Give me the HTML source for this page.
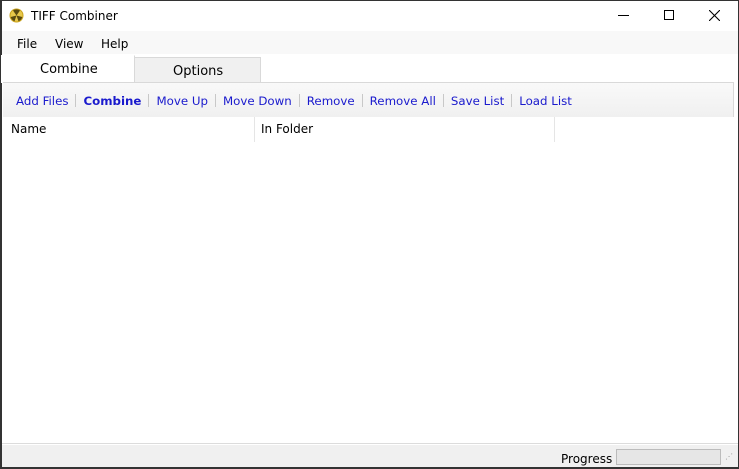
<!DOCTYPE html>
<html><head><meta charset="utf-8"><style>
*{margin:0;padding:0;box-sizing:border-box}
body{width:739px;height:469px;overflow:hidden;background:#fff;font-family:"DejaVu Sans","Liberation Sans",sans-serif;font-size:12px;color:#000;position:relative}
.win{position:absolute;left:0;top:0;width:739px;height:469px;border:1px solid #333;border-bottom:2px solid #333;border-left:2px solid #333}
.a{position:absolute}
.t{font-size:12px;white-space:nowrap}
.tb a{color:#1a1acd;text-decoration:none}
.sep{display:inline-block;width:1px;height:13px;background:#c8c8c8;margin:0 7px;vertical-align:-2px}
</style></head><body>
<div class="win"></div>
<svg class="a" style="left:9px;top:8px" width="15" height="15" viewBox="0 0 15 15"><circle cx="7.5" cy="7.5" r="7" fill="#c9a21a"/><circle cx="7.5" cy="7.5" r="6" fill="#e8c84a"/><path d="M7.5 7.5L4 2.5A6 6 0 0 1 11 2.5Z M7.5 7.5L13.3 9A6 6 0 0 1 9.5 13.2Z M7.5 7.5L5.5 13.2A6 6 0 0 1 1.7 9Z" fill="#5a4a10"/></svg>
<div class="a t" style="left:31px;top:9px">TIFF Combiner</div>
<div class="a" style="left:618px;top:15px;width:11px;height:1px;background:#000"></div>
<div class="a" style="left:664px;top:10px;width:10px;height:10px;border:1px solid #000"></div>
<svg class="a" style="left:709px;top:10px" width="11" height="11"><path d="M0 0L11 11M11 0L0 11" stroke="#000" stroke-width="1.1"/></svg>
<div class="a" style="left:2px;top:31px;width:736px;height:23px;background:#f8f8f8"></div>
<div class="a t" style="left:17px;top:37px">File</div>
<div class="a t" style="left:55px;top:37px">View</div>
<div class="a t" style="left:101px;top:37px">Help</div>
<div class="a" style="left:134px;top:57px;width:127px;height:26px;background:#f0f0f0;border:1px solid #d9d9d9;border-bottom:none"></div>
<div class="a t" style="left:173px;top:64px;font-size:13px">Options</div>
<div class="a" style="left:1px;top:55px;width:134px;height:28px;background:#fff;border-right:1px solid #d9d9d9;border-top:1px solid #fff"></div>
<div class="a t" style="left:40px;top:62px;font-size:13px">Combine</div>
<div class="a" style="left:3px;top:82px;width:731px;height:35px;border-top:1px solid #d9d9d9;border-right:1px solid #d9d9d9;background:linear-gradient(#f9f9f9,#f0f0f0)"></div>
<div class="a t tb" style="left:16px;top:94px;font-size:11.8px"><a>Add Files</a><span class="sep"></span><a style="font-weight:bold">Combine</a><span class="sep"></span><a>Move Up</a><span class="sep"></span><a>Move Down</a><span class="sep"></span><a>Remove</a><span class="sep"></span><a>Remove All</a><span class="sep"></span><a>Save List</a><span class="sep"></span><a>Load List</a></div>
<div class="a t" style="left:11px;top:122px">Name</div>
<div class="a" style="left:254px;top:117px;width:1px;height:25px;background:#e5e5e5"></div>
<div class="a t" style="left:261px;top:122px">In Folder</div>
<div class="a" style="left:554px;top:117px;width:1px;height:25px;background:#e5e5e5"></div>
<div class="a" style="left:2px;top:443px;width:736px;height:1px;background:#dcdcdc"></div>
<div class="a" style="left:2px;top:444px;width:736px;height:23px;background:#f0f0f0;border-top:1px solid #fff"></div>
<div class="a t" style="left:561px;top:452px">Progress</div>
<div class="a" style="left:616px;top:449px;width:105px;height:16px;background:#e6e6e6;border:1px solid #bcbcbc"></div>
<div class="a t" style="left:725px;top:452px;font-size:8px;color:#999;letter-spacing:-1px">⋰</div>
</body></html>
